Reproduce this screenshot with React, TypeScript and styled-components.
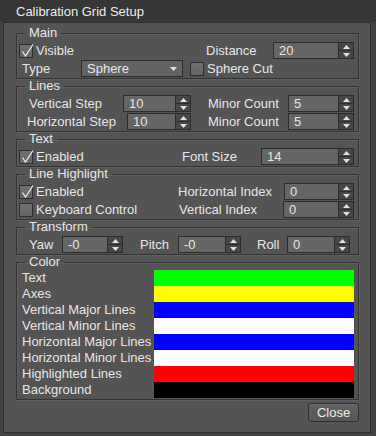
import React from "react";
import styled, { createGlobalStyle } from "styled-components";

const GlobalStyle = createGlobalStyle`
  html, body {
    margin: 0;
    padding: 0;
    background: #3c3c3c;
  }
  body {
    font-family: "Liberation Sans", Arial, sans-serif;
    font-size: 13px;
    color: #e6e6e6;
  }
  * {
    box-sizing: border-box;
  }
`;

const Window = styled.div`
  width: 376px;
  height: 436px;
  background: #424242;
  display: flex;
  flex-direction: column;
`;

const TitleBar = styled.div`
  height: 22px;
  flex: none;
  padding-left: 16px;
  display: flex;
  align-items: center;
  background: #363636;
  color: #ececec;
`;

const Frame = styled.div`
  flex: 1;
  margin: 0 5px 3px 3px;
  border: 1px solid #2f2f2f;
  background: #545454;
  padding: 3px 11px 0 12px;
  display: flex;
  flex-direction: column;
`;

const Group = styled.fieldset<{ $padTop?: number }>`
  margin: 0;
  min-width: 0;
  padding: ${(p) => p.$padTop ?? 2}px 2px 1px 2px;
  border: 1px solid #343434;
  box-shadow: 1px 1px 0 #5f5f5f, inset 1px 1px 0 #5f5f5f;
`;

const Legend = styled.legend`
  padding: 0 4px;
  margin-left: 6px;
  line-height: 14px;
  color: #e6e6e6;
`;

const Row = styled.div<{ $cols: string }>`
  display: grid;
  grid-template-columns: ${(p) => p.$cols};
  align-items: center;
  height: 17px;
  & + & {
    margin-top: 1px;
  }
`;

const Label = styled.span<{ $indent?: number }>`
  padding-left: ${(p) => p.$indent ?? 0}px;
  white-space: nowrap;
  line-height: 17px;
`;

const CheckRow = styled.label`
  display: flex;
  align-items: center;
  gap: 3px;
  white-space: nowrap;
`;

const CheckBox = styled.span`
  position: relative;
  width: 14px;
  height: 14px;
  flex: none;
  border: 1px solid #2e2e2e;
  background: linear-gradient(#707070, #646464);
`;

const CheckMark = styled.svg`
  position: absolute;
  left: 0;
  top: -2px;
`;

const SpinFrame = styled.div`
  height: 17px;
  display: flex;
  border: 1px solid #2c2c2c;
  background: #656565;
`;

const SpinText = styled.div`
  flex: 1;
  padding-left: 5px;
  line-height: 15px;
  overflow: hidden;
`;

const SpinButtons = styled.div`
  width: 15px;
  display: flex;
  flex-direction: column;
  gap: 1px;
  background: #2c2c2c;
  border-left: 1px solid #2c2c2c;
`;

const SpinButton = styled.div`
  flex: 1;
  background: #474747;
  display: flex;
  align-items: center;
  justify-content: center;
`;

const Combo = styled.div`
  height: 17px;
  display: flex;
  align-items: center;
  justify-content: space-between;
  border: 1px solid #2c2c2c;
  background: #636363;
  padding: 0 5px;
`;

const ColorRow = styled.div`
  display: grid;
  grid-template-columns: 1fr 200px;
  height: 16px;
  padding-right: 2px;
`;

const ColorLabel = styled.span`
  padding-left: 3px;
  line-height: 16px;
  white-space: nowrap;
`;

const Swatch = styled.div<{ $color: string }>`
  background: ${(p) => p.$color};
`;

const Footer = styled.div`
  display: flex;
  justify-content: flex-end;
  margin-top: 3px;
`;

const CloseButton = styled.button`
  width: 51px;
  height: 19px;
  padding: 0;
  border: 1px solid #2e2e2e;
  border-radius: 3px;
  background: linear-gradient(#626262, #565656);
  color: #ececec;
  font-family: inherit;
  font-size: 13px;
  box-shadow: inset 0 1px 0 #6e6e6e;
`;

const Check = ({ checked }: { checked?: boolean }) => (
  <CheckBox>
    {checked && (
      <CheckMark width="15" height="15" viewBox="0 0 15 15">
        <path d="M2.5 8.5 L5.5 13 L13 1.5" fill="none" stroke="#e8e8e8" strokeWidth="1.3" />
      </CheckMark>
    )}
  </CheckBox>
);

const Spin = ({ value }: { value: string }) => (
  <SpinFrame>
    <SpinText>{value}</SpinText>
    <SpinButtons>
      <SpinButton>
        <svg width="7" height="4" viewBox="0 0 7 4">
          <path d="M0 4 L3.5 0 L7 4 Z" fill="#e0e0e0" />
        </svg>
      </SpinButton>
      <SpinButton>
        <svg width="7" height="4" viewBox="0 0 7 4">
          <path d="M0 0 L7 0 L3.5 4 Z" fill="#e0e0e0" />
        </svg>
      </SpinButton>
    </SpinButtons>
  </SpinFrame>
);

const colors = [
  { label: "Text", color: "#00ff00" },
  { label: "Axes", color: "#ffff00" },
  { label: "Vertical Major Lines", color: "#0000ff" },
  { label: "Vertical Minor Lines", color: "#ffffff" },
  { label: "Horizontal Major Lines", color: "#0000ff" },
  { label: "Horizontal Minor Lines", color: "#ffffff" },
  { label: "Highlighted Lines", color: "#ff0000" },
  { label: "Background", color: "#000000" },
];

const App = () => {
  return (
    <Window>
      <GlobalStyle />
      <TitleBar>Calibration Grid Setup</TitleBar>
      <Frame>
        <Group>
          <Legend>Main</Legend>
          <Row $cols="187px 67px 81px">
            <CheckRow>
              <Check checked />
              Visible
            </CheckRow>
            <Label>Distance</Label>
            <Spin value="20" />
          </Row>
          <Row $cols="62px 102px 7px auto">
            <Label $indent={3}>Type</Label>
            <Combo>
              <span>Sphere</span>
              <svg width="7" height="4" viewBox="0 0 7 4">
                <path d="M0 0 L7 0 L3.5 4 Z" fill="#e0e0e0" />
              </svg>
            </Combo>
            <span />
            <CheckRow>
              <Check />
              Sphere Cut
            </CheckRow>
          </Row>
        </Group>

        <Group>
          <Legend>Lines</Legend>
          <Row $cols="104px 68px 17px 80px 66px">
            <Label $indent={10}>Vertical Step</Label>
            <Spin value="10" />
            <span />
            <Label>Minor Count</Label>
            <Spin value="5" />
          </Row>
          <Row $cols="108px 64px 17px 80px 66px">
            <Label $indent={8}>Horizontal Step</Label>
            <Spin value="10" />
            <span />
            <Label>Minor Count</Label>
            <Spin value="5" />
          </Row>
        </Group>

        <Group>
          <Legend>Text</Legend>
          <Row $cols="163px 79px 93px">
            <CheckRow>
              <Check checked />
              Enabled
            </CheckRow>
            <Label>Font Size</Label>
            <Spin value="14" />
          </Row>
        </Group>

        <Group>
          <Legend>Line Highlight</Legend>
          <Row $cols="159px 106px 70px">
            <CheckRow>
              <Check checked />
              Enabled
            </CheckRow>
            <Label>Horizontal Index</Label>
            <Spin value="0" />
          </Row>
          <Row $cols="160px 104px 71px">
            <CheckRow>
              <Check />
              Keyboard Control
            </CheckRow>
            <Label>Vertical Index</Label>
            <Spin value="0" />
          </Row>
        </Group>

        <Group>
          <Legend>Transform</Legend>
          <Row $cols="43px 61px 17px 38px 63px 16px 30px 63px">
            <Label $indent={10}>Yaw</Label>
            <Spin value="-0" />
            <span />
            <Label>Pitch</Label>
            <Spin value="-0" />
            <span />
            <Label>Roll</Label>
            <Spin value="0" />
          </Row>
        </Group>

        <Group $padTop={1}>
          <Legend>Color</Legend>
          {colors.map((c) => (
            <ColorRow key={c.label}>
              <ColorLabel>{c.label}</ColorLabel>
              <Swatch $color={c.color} />
            </ColorRow>
          ))}
        </Group>

        <Footer>
          <CloseButton>Close</CloseButton>
        </Footer>
      </Frame>
    </Window>
  );
};

export default App;
